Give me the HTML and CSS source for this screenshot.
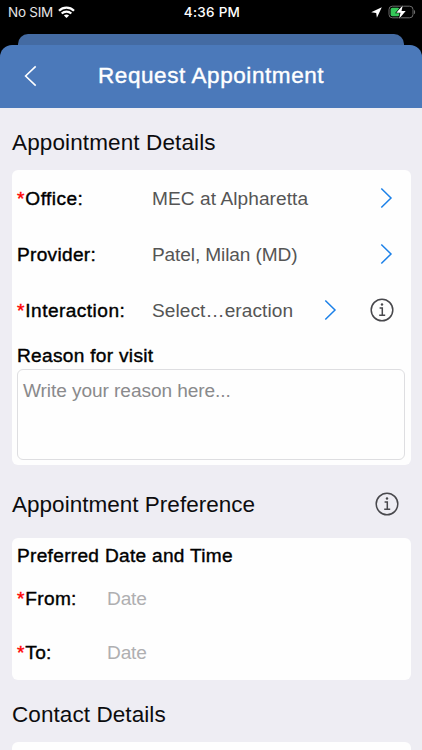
FILE: index.html
```html
<!DOCTYPE html>
<html lang="en">
<head>
<meta charset="utf-8">
<title>Request Appointment</title>
<link rel="stylesheet" href="styles.css">
</head>
<body>
<div class="statusbar">
  <div class="carrier"><span>No SIM</span>
    <svg width="17" height="13" viewBox="0 0 17 13" fill="none" stroke="#fff" stroke-width="2.3"><path d="M1 4.7C5.2.6 11.8.6 16 4.7M3.7 7.5c2.7-2.6 6.900-2.600 9.600 0"/><path d="M8.500 12 5.900 9.500c1.500-1.300 3.700-1.300 5.200 0z" fill="#fff" stroke="none"/></svg>
  </div>
  <div class="clock">4:36 PM</div>
  <div class="power">
    <svg width="11" height="11" viewBox="0 0 11 11"><path d="M10.800.2 5.900 10.800 5.200 6 .2 5.300z" fill="#fff"/></svg>
    <svg width="28" height="15" viewBox="0 0 28 15"><rect x="1" y="1.200" width="24" height="11.600" rx="3.300" fill="none" stroke="#6b6b6b"/><path d="M26 4.900c1.500.5 1.500 3.700 0 4.200z" fill="#6b6b6b"/><rect x="2.600" y="2.800" width="9" height="8.400" rx="1.800" fill="#35c759"/><path d="M14.800.2 8.300 7.700h4.200l-1.400 6 6.600-7.600h-4.200z" fill="#fff" stroke="#000" stroke-width="1.200" paint-order="stroke"/></svg>
  </div>
</div>
<div class="sheet-behind"></div>
<header class="navbar">
  <svg class="back" width="13" height="22" viewBox="0 0 13 22" fill="none" stroke="#fff" stroke-width="1.600"><path d="M11.700 1.300 1.600 11 11.700 20.700"/></svg>
  <h1>Request Appointment</h1>
</header>
<main>
  <h2 class="details-title">Appointment Details</h2>
  <section class="card details">
    <div class="row"><span class="label"><i>*</i>Office:</span><span class="value office">MEC at Alpharetta</span>
      <svg class="chevron" width="13" height="22" viewBox="0 0 13 22"><path d="M1.300 1.500 11 11 1.300 20.500"/></svg></div>
    <div class="row"><span class="label provider">Provider:</span><span class="value doctor">Patel, Milan (MD)</span>
      <svg class="chevron" width="13" height="22" viewBox="0 0 13 22"><path d="M1.300 1.500 11 11 1.300 20.500"/></svg></div>
    <div class="row"><span class="label"><i>*</i>Interaction:</span><span class="value office">Select…eraction</span>
      <svg class="chevron" width="13" height="22" viewBox="0 0 13 22"><path d="M1.300 1.500 11 11 1.300 20.500"/></svg>
      <svg class="info" width="24" height="24" viewBox="0 0 24 24"><circle cx="12" cy="12" r="10.800"/><path d="M9.600 9.900h2.700v7.300M9.200 17.300h6"/><circle class="dot" cx="12" cy="6.500" r="1.200"/></svg></div>
    <div class="label reason">Reason for visit</div>
    <div class="textbox">Write your reason here...</div>
  </section>
  <div class="pref-title"><h2>Appointment Preference</h2>
    <svg class="info" width="24" height="24" viewBox="0 0 24 24"><circle cx="12" cy="12" r="10.800"/><path d="M9.600 9.900h2.700v7.300M9.200 17.300h6"/><circle class="dot" cx="12" cy="6.500" r="1.200"/></svg></div>
  <section class="card preference">
    <div class="label subtitle">Preferred Date and Time</div>
    <div class="date-row"><span class="label"><i>*</i>From:</span><span class="date">Date</span></div>
    <div class="date-row"><span class="label"><i>*</i>To:</span><span class="date">Date</span></div>
  </section>
  <h2 class="contact-title">Contact Details</h2>
  <section class="card contact"></section>
</main>
</body>
</html>
```
FILE: styles.css
```css
* { box-sizing: border-box; }
body {
  margin: 0;
  width: 422px;
  height: 750px;
  overflow: hidden;
  background: #000;
  font-family: "Liberation Sans", Arial, sans-serif;
  color: #0c0c0e;
}
svg { display: block; flex: none; }
.statusbar {
  height: 34px;
  padding: 0 6px 10px 8px;
  display: grid;
  grid-template-columns: 1fr auto 1fr;
  align-items: center;
  color: #fff;
  font: 14px/24px Inter, sans-serif;
}
.carrier { display: flex; align-items: center; gap: 6px; color: #e4e4e4; font-size: 13.5px; letter-spacing: -.25px; }
.carrier svg { margin-left: -1px; }
.clock { font-weight: 500; font-size: 13.5px; letter-spacing: .25px; }
.power { display: flex; align-items: center; justify-content: flex-end; gap: 6px; }
.sheet-behind { height: 11px; margin: 0 18px; background: #446ba3; border-radius: 10px 10px 0 0; }
.navbar {
  height: 63px;
  padding: 0 0 1px 24px;
  display: flex;
  align-items: center;
  background: #4b79ba;
  border-radius: 12px 12px 0 0;
  color: #fff;
}
h1, h2 { margin: 0; font-size: 22.5px; font-weight: 400; white-space: nowrap; }
h1 { margin-left: 61px; letter-spacing: .58px; -webkit-text-stroke: .4px; }
h2 { letter-spacing: .08px; }
main { height: 642px; padding: 0 11px 0 12px; background: #eeedf3; }
.details-title { height: 62px; padding-top: 8px; line-height: 54px; letter-spacing: .12px; }
.card { background: #fefefe; border-radius: 6px; }
.details { height: 295px; padding: 0 6px 0 5px; }
.row { height: 56px; display: flex; align-items: center; }
.label { font-size: 19.1px; letter-spacing: .3px; -webkit-text-stroke: .4px; white-space: nowrap; color: #000; }
.label i { font-style: normal; color: #f00; letter-spacing: .9px; }
.row .label { width: 135px; flex: none; letter-spacing: .45px; }
.row .provider { letter-spacing: .3px; }
.row span, .date-row span { padding-top: 2px; }
.value { flex: 1; font-size: 19.1px; color: #555; white-space: nowrap; }
.office { letter-spacing: .07px; }
.doctor { letter-spacing: -.12px; }
.chevron { margin-right: 12px; fill: none; stroke: #1b80e8; stroke-width: 1.500; }
.info { fill: none; stroke: #48484c; stroke-width: 1.500; }
.info .dot { fill: #48484c; stroke: none; }
.row .info { margin: 0 11px 0 21px; }
.reason { height: 31px; line-height: 36px; }
.textbox {
  height: 91px;
  padding: 9px 5px;
  border: 1px solid #dedee1;
  border-radius: 6px;
  font-size: 19.1px;
  line-height: 24px;
  letter-spacing: -.08px;
  color: #8a8a8c;
}
.pref-title { height: 73px; padding: 5px 12px 0 0; display: flex; align-items: center; justify-content: space-between; }
.pref-title h2 { padding-top: 2px; letter-spacing: .02px; }
.preference { height: 142px; padding: 0 5px; }
.subtitle { height: 33px; line-height: 36px; }
.date-row { height: 54px; display: flex; align-items: center; }
.date-row .label { width: 90px; }
.date { font-size: 19.1px; letter-spacing: -.15px; color: #afafb1; }
.contact-title { height: 62px; line-height: 70px; }
.contact { height: 8px; border-radius: 6px 6px 0 0; }
```
